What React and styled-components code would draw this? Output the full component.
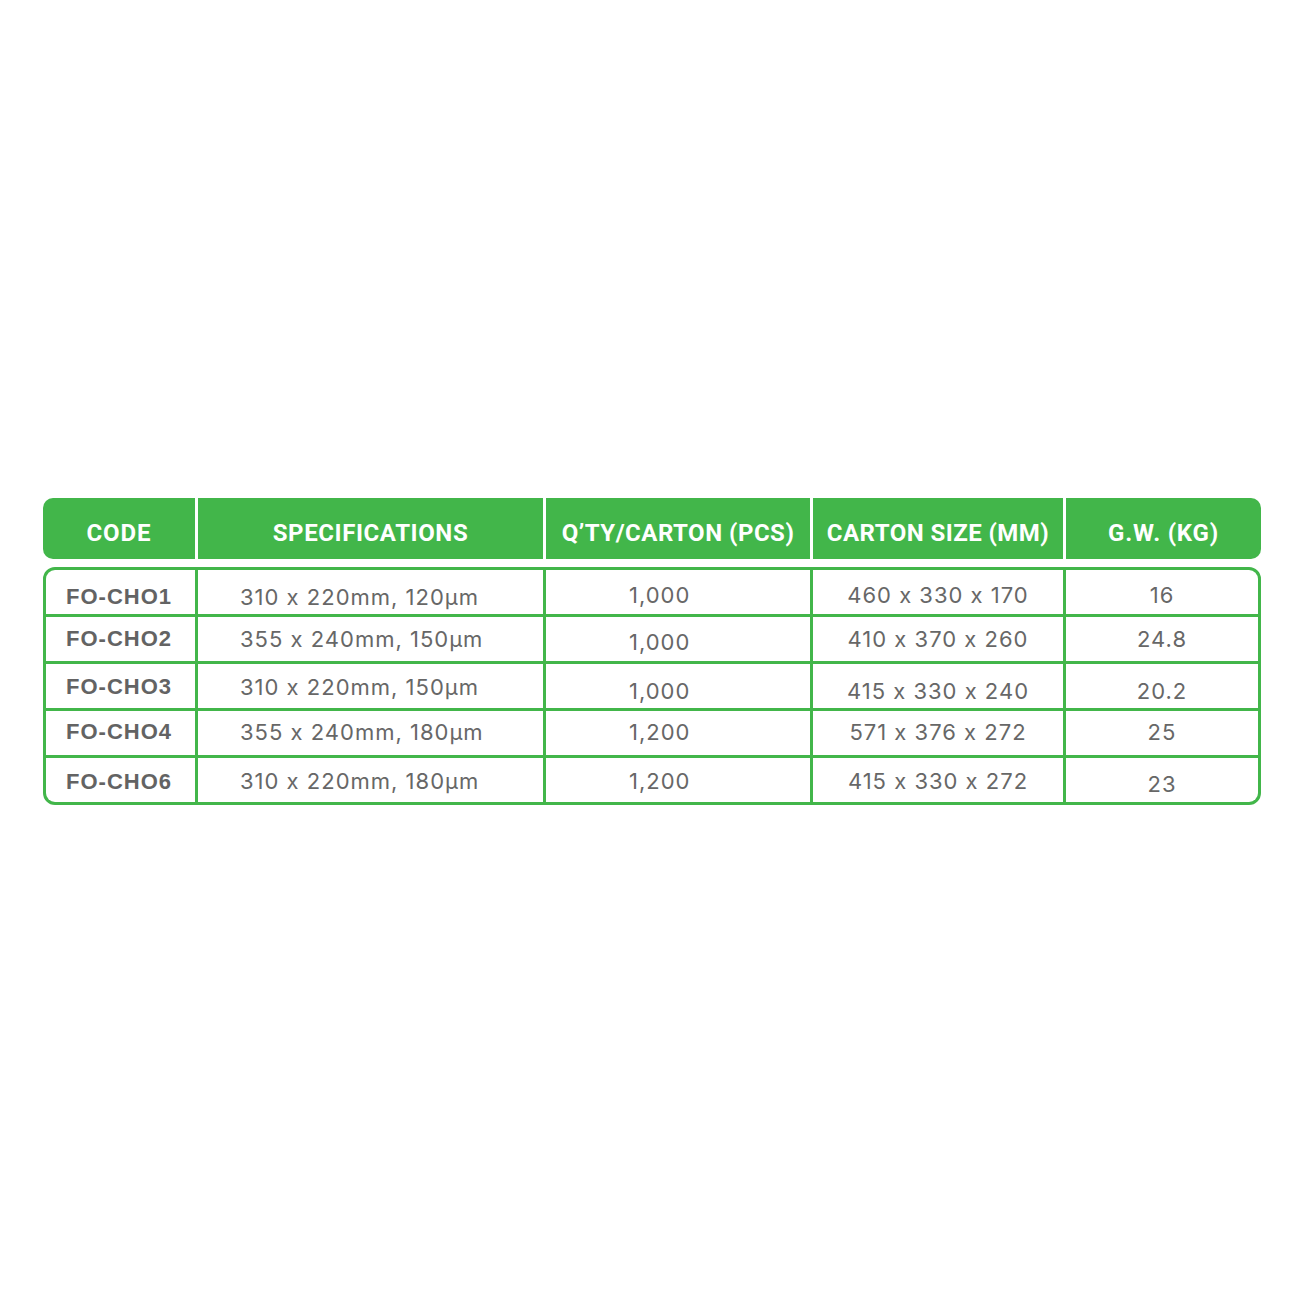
import React from "react";
import styled, { createGlobalStyle } from "styled-components";

const GlobalStyle = createGlobalStyle`
  body {
    margin: 0;
    background: #ffffff;
    font-family: "Inter", "Liberation Sans", sans-serif;
  }
`;

const GREEN = "#42b64a";

const Page = styled.div`
  width: 1300px;
  height: 1300px;
  padding: 498px 0 0 43px;
  box-sizing: border-box;
`;

const Table = styled.div`
  width: 1218px;
  display: flex;
  flex-direction: column;
  gap: 8px;
`;

const HeaderRow = styled.div`
  display: grid;
  grid-template-columns: 152px 345px 264px 250px 1fr;
  gap: 3px;
  background: #ffffff;
  border-radius: 10px;
  overflow: hidden;
  height: 61px;
`;

const HeaderCell = styled.div`
  background: ${GREEN};
  color: #ffffff;
  font-family: "Roboto", "Liberation Sans", sans-serif;
  font-weight: 700;
  font-size: 24px;
  letter-spacing: ${(p) => p.$spacing || 0}px;
  display: flex;
  align-items: center;
  justify-content: center;
  padding-top: 8px;
  box-sizing: border-box;
  white-space: nowrap;
`;

const Body = styled.div`
  border: 3px solid ${GREEN};
  border-radius: 12px;
  overflow: hidden;
  display: grid;
  grid-template-columns: 149px 345px 264px 250px 1fr;
  grid-auto-rows: 44px;
  gap: 3px;
  background: ${GREEN};
`;

const Cell = styled.div`
  background: #ffffff;
  color: #676767;
  font-size: 22px;
  letter-spacing: 1px;
  display: flex;
  align-items: center;
  justify-content: ${(p) => (p.$left ? "flex-start" : "center")};
  padding-left: ${(p) => p.$pad || 0}px;
  box-sizing: border-box;
  white-space: nowrap;
  & > span {
    position: relative;
    top: ${(p) => p.$shift || 0}px;
  }
`;

const CodeCell = styled(Cell)`
  font-family: "Liberation Sans", "Arial", sans-serif;
  font-weight: 700;
  font-size: 22px;
  letter-spacing: 1px;
  color: #636363;
  padding-left: 20px;
  justify-content: flex-start;
`;

const headers = [
  { label: "CODE", spacing: 0.9 },
  { label: "SPECIFICATIONS", spacing: 0.6 },
  { label: "Q’TY/CARTON (PCS)", spacing: 0.5 },
  { label: "CARTON SIZE (MM)", spacing: 0.45 },
  { label: "G.W. (KG)", spacing: 0.8 },
];

const rows = [
  { code: "FO-CHO1", spec: "310 x 220mm, 120µm", qty: "1,000", size: "460 x 330 x 170", gw: "16", s: [5, 5, 3, 3, 3] },
  { code: "FO-CHO2", spec: "355 x 240mm, 150µm", qty: "1,000", size: "410 x 370 x 260", gw: "24.8", s: [0, 0, 3, 0, 0] },
  { code: "FO-CHO3", spec: "310 x 220mm, 150µm", qty: "1,000", size: "415 x 330 x 240", gw: "20.2", s: [1, 1, 5, 5, 5] },
  { code: "FO-CHO4", spec: "355 x 240mm, 180µm", qty: "1,200", size: "571 x 376 x 272", gw: "25", s: [-1, -1, -1, -1, -1] },
  { code: "FO-CHO6", spec: "310 x 220mm, 180µm", qty: "1,200", size: "415 x 330 x 272", gw: "23", s: [2, 1, 1, 1, 4] },
];

export default function App() {
  return (
    <>
      <GlobalStyle />
      <Page>
        <Table>
          <HeaderRow>
            {headers.map((h) => (
              <HeaderCell key={h.label} $spacing={h.spacing}>
                {h.label}
              </HeaderCell>
            ))}
          </HeaderRow>
          <Body>
            {rows.map((r) => (
              <React.Fragment key={r.code}>
                <CodeCell $shift={r.s[0]}>
                  <span>{r.code}</span>
                </CodeCell>
                <Cell $left $pad={42} $shift={r.s[1]}>
                  <span>{r.spec}</span>
                </Cell>
                <Cell $left $pad={83} $shift={r.s[2]}>
                  <span>{r.qty}</span>
                </Cell>
                <Cell $shift={r.s[3]}>
                  <span>{r.size}</span>
                </Cell>
                <Cell $shift={r.s[4]}>
                  <span>{r.gw}</span>
                </Cell>
              </React.Fragment>
            ))}
          </Body>
        </Table>
      </Page>
    </>
  );
}
